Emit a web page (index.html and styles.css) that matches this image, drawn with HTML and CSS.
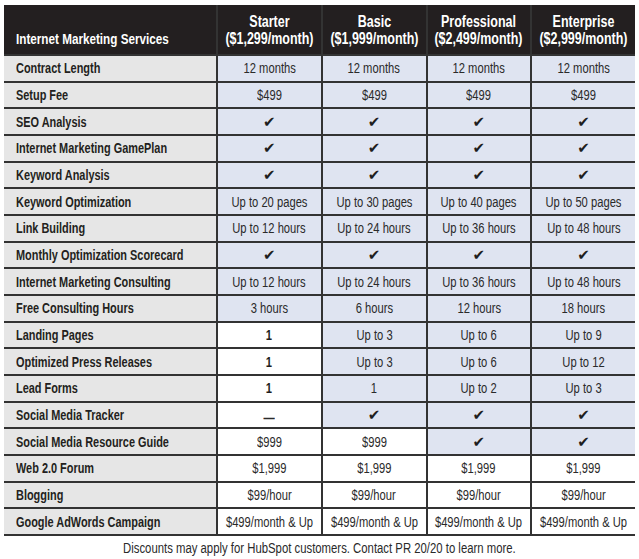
FILE: index.html
```html
<!DOCTYPE html>
<html>
<head>
<meta charset="utf-8">
<link rel="stylesheet" href="styles.css">
</head>
<body>
<div class="table">
  <div class="hd hd-label"><span class="t">Internet Marketing Services</span></div>
  <div class="hd"><span class="t">Starter<br>($1,299/month)</span></div>
  <div class="hd"><span class="t">Basic<br>($1,999/month)</span></div>
  <div class="hd"><span class="t">Professional<br>($2,499/month)</span></div>
  <div class="hd"><span class="t">Enterprise<br>($2,999/month)</span></div>

  <div class="lbl"><span class="t">Contract Length</span></div>
  <div class="c b"><span class="t">12 months</span></div><div class="c b"><span class="t">12 months</span></div><div class="c b"><span class="t">12 months</span></div><div class="c b"><span class="t">12 months</span></div>

  <div class="lbl"><span class="t">Setup Fee</span></div>
  <div class="c b"><span class="t">$499</span></div><div class="c b"><span class="t">$499</span></div><div class="c b"><span class="t">$499</span></div><div class="c b"><span class="t">$499</span></div>

  <div class="lbl"><span class="t">SEO Analysis</span></div>
  <div class="c b ck">✔</div><div class="c b ck">✔</div><div class="c b ck">✔</div><div class="c b ck">✔</div>

  <div class="lbl"><span class="t">Internet Marketing GamePlan</span></div>
  <div class="c b ck">✔</div><div class="c b ck">✔</div><div class="c b ck">✔</div><div class="c b ck">✔</div>

  <div class="lbl"><span class="t">Keyword Analysis</span></div>
  <div class="c b ck">✔</div><div class="c b ck">✔</div><div class="c b ck">✔</div><div class="c b ck">✔</div>

  <div class="lbl"><span class="t">Keyword Optimization</span></div>
  <div class="c b"><span class="t">Up to 20 pages</span></div><div class="c b"><span class="t">Up to 30 pages</span></div><div class="c b"><span class="t">Up to 40 pages</span></div><div class="c b"><span class="t">Up to 50 pages</span></div>

  <div class="lbl"><span class="t">Link Building</span></div>
  <div class="c b"><span class="t">Up to 12 hours</span></div><div class="c b"><span class="t">Up to 24 hours</span></div><div class="c b"><span class="t">Up to 36 hours</span></div><div class="c b"><span class="t">Up to 48 hours</span></div>

  <div class="lbl"><span class="t">Monthly Optimization Scorecard</span></div>
  <div class="c b ck">✔</div><div class="c b ck">✔</div><div class="c b ck">✔</div><div class="c b ck">✔</div>

  <div class="lbl"><span class="t">Internet Marketing Consulting</span></div>
  <div class="c b"><span class="t">Up to 12 hours</span></div><div class="c b"><span class="t">Up to 24 hours</span></div><div class="c b"><span class="t">Up to 36 hours</span></div><div class="c b"><span class="t">Up to 48 hours</span></div>

  <div class="lbl"><span class="t">Free Consulting Hours</span></div>
  <div class="c b"><span class="t">3 hours</span></div><div class="c b"><span class="t">6 hours</span></div><div class="c b"><span class="t">12 hours</span></div><div class="c b"><span class="t">18 hours</span></div>

  <div class="lbl"><span class="t">Landing Pages</span></div>
  <div class="c w strong"><span class="t">1</span></div><div class="c b"><span class="t">Up to 3</span></div><div class="c b"><span class="t">Up to 6</span></div><div class="c b"><span class="t">Up to 9</span></div>

  <div class="lbl"><span class="t">Optimized Press Releases</span></div>
  <div class="c w strong"><span class="t">1</span></div><div class="c b"><span class="t">Up to 3</span></div><div class="c b"><span class="t">Up to 6</span></div><div class="c b"><span class="t">Up to 12</span></div>

  <div class="lbl"><span class="t">Lead Forms</span></div>
  <div class="c w strong"><span class="t">1</span></div><div class="c b"><span class="t">1</span></div><div class="c b"><span class="t">Up to 2</span></div><div class="c b"><span class="t">Up to 3</span></div>

  <div class="lbl"><span class="t">Social Media Tracker</span></div>
  <div class="c w"><span class="t dash">—</span></div><div class="c b ck">✔</div><div class="c b ck">✔</div><div class="c b ck">✔</div>

  <div class="lbl"><span class="t">Social Media Resource Guide</span></div>
  <div class="c w"><span class="t">$999</span></div><div class="c w"><span class="t">$999</span></div><div class="c b ck">✔</div><div class="c b ck">✔</div>

  <div class="lbl"><span class="t">Web 2.0 Forum</span></div>
  <div class="c w"><span class="t">$1,999</span></div><div class="c w"><span class="t">$1,999</span></div><div class="c w"><span class="t">$1,999</span></div><div class="c w"><span class="t">$1,999</span></div>

  <div class="lbl"><span class="t">Blogging</span></div>
  <div class="c w"><span class="t">$99/hour</span></div><div class="c w"><span class="t">$99/hour</span></div><div class="c w"><span class="t">$99/hour</span></div><div class="c w"><span class="t">$99/hour</span></div>

  <div class="lbl"><span class="t">Google AdWords Campaign</span></div>
  <div class="c w"><span class="t">$499/month &amp; Up</span></div><div class="c w"><span class="t">$499/month &amp; Up</span></div><div class="c w"><span class="t">$499/month &amp; Up</span></div><div class="c w"><span class="t">$499/month &amp; Up</span></div>
</div>
<div class="note"><span class="t">Discounts may apply for HubSpot customers. Contact PR 20/20 to learn more.</span></div>
</body>
</html>
```

FILE: styles.css
```css
html, body {
  margin: 0;
  background: #ffffff;
}
body {
  padding: 5px 5px 0 4px;
  font-family: "Liberation Sans", Arial, sans-serif;
  color: #222;
}
.t {
  display: inline-block;
  white-space: nowrap;
  transform: scaleX(0.78);
  transform-origin: center center;
}
.table {
  width: 631px;
  height: 531px;
  display: grid;
  grid-template-columns: 212px repeat(4, minmax(0, 1fr));
  grid-template-rows: 49px repeat(18, minmax(0, 1fr));
  gap: 2px 2px;
  background: #333333;
  border-bottom: 2px solid #333333;
  box-sizing: border-box;
}
.hd {
  background: #231f20;
  color: #ffffff;
  font-weight: bold;
  font-size: 16px;
  line-height: 17px;
  display: flex;
  align-items: center;
  justify-content: center;
  text-align: center;
  overflow: hidden;
}
.hd-label {
  justify-content: flex-start;
  align-items: flex-end;
  padding: 0 0 7px 12px;
  text-align: left;
  font-size: 15px;
}
.hd-label .t,
.lbl .t {
  transform-origin: left center;
}
.lbl {
  background: #e6e6e6;
  font-weight: bold;
  font-size: 14px;
  display: flex;
  align-items: center;
  padding-left: 12px;
  color: #231f20;
  overflow: hidden;
}
.c {
  display: flex;
  align-items: center;
  justify-content: center;
  font-size: 14px;
  color: #2a2a2a;
  overflow: hidden;
}
.c .t {
  transform: scaleX(0.8);
}
.b { background: #dfe4f1; }
.w { background: #ffffff; }
.strong { font-weight: bold; color: #1e1e1e; }
.ck {
  font-family: "DejaVu Sans", sans-serif;
  font-size: 15px;
  color: #1e1e1e;
}
.dash {
  font-weight: bold;
  position: relative;
  top: 3px;
}
.note {
  margin: 4px 0 0;
  width: 631px;
  text-align: center;
  font-size: 14px;
  color: #2a2a2a;
}
.note .t {
  transform: scaleX(0.81);
}
```
